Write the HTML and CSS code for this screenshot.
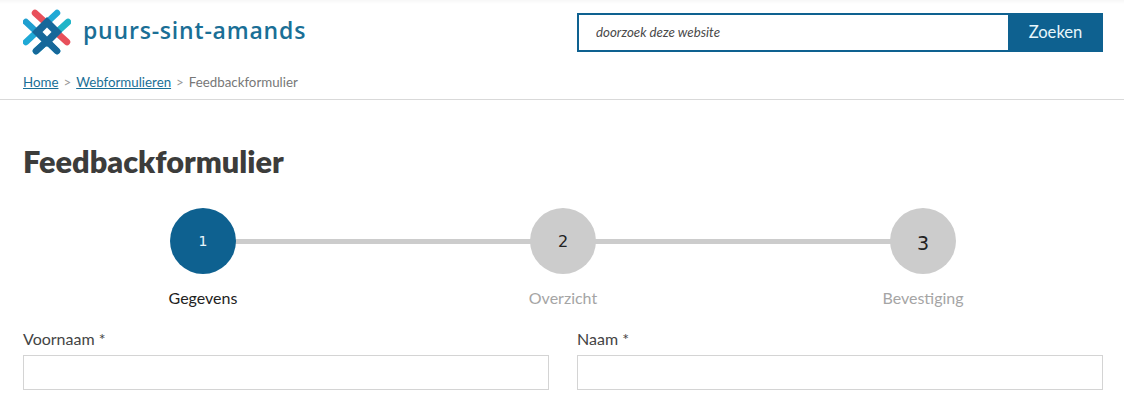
FILE: index.html
```html
<!DOCTYPE html>
<html lang="nl">
<head>
<meta charset="utf-8">
<title>Feedbackformulier</title>
<link rel="stylesheet" href="styles.css">
</head>
<body>
<header class="site-header">
  <div class="top-row">
    <a class="logo" href="#">
      <svg class="logo-mark" width="48" height="46" viewBox="0 0 48 46" aria-hidden="true">
        <g fill="none" stroke-width="6.5" stroke-linecap="round">
          <path d="M12 4 L44 33" stroke="#e8505b"/>
          <path d="M3 13 L34 42" stroke="#1f9fd0"/>
          <path d="M34 4 L3 33" stroke="#1fa9d6"/>
          <path d="M45 13 L13 42" stroke="#1fb5c8"/>
          <path d="M24 32 L13 42" stroke="#16689a"/>
          <path d="M24 32 L34 42" stroke="#16689a"/>
        </g>
        <path d="M24 8 L39 23 L24 38 L9 23 Z" fill="#16689a"/>
        <path d="M24 18.500 L28.500 23 L24 27.500 L19.500 23 Z" fill="#fff"/>
      </svg>
      <span class="logo-text">puurs-sint-amands</span>
    </a>
    <form class="search">
      <input class="search-input" type="text" placeholder="doorzoek deze website">
      <button class="search-button" type="button">Zoeken</button>
    </form>
  </div>
  <nav class="breadcrumb">
    <a href="#">Home</a><span class="sep">&gt;</span><a href="#">Webformulieren</a><span class="sep">&gt;</span><span class="current">Feedbackformulier</span>
  </nav>
</header>
<main class="content">
  <h1>Feedbackformulier</h1>
  <ol class="steps">
    <li class="step active"><span class="circle">1</span><span class="step-label">Gegevens</span></li>
    <li class="step"><span class="circle medium">2</span><span class="step-label">Overzicht</span></li>
    <li class="step"><span class="circle large">3</span><span class="step-label">Bevestiging</span></li>
  </ol>
  <form class="fields">
    <label class="field"><span class="field-label">Voornaam *</span><input type="text"></label>
    <label class="field"><span class="field-label">Naam *</span><input type="text"></label>
  </form>
</main>
</body>
</html>
```
FILE: styles.css
```css
* { box-sizing: border-box; }
html, body { height: 406px; overflow: hidden; }
body {
  margin: 0;
  background: #fff;
  color: #3c3c3b;
  font-family: "Lato", "Open Sans", sans-serif;
  font-size: 15px;
}
.site-header {
  height: 100px;
  padding: 0 21px 0 23px;
  border-bottom: 1px solid #d9d9d9;
  background: linear-gradient(#f7f7f7 0, #fff 4px);
}
.top-row {
  display: flex;
  justify-content: space-between;
  align-items: flex-start;
  height: 73px;
}
.logo {
  display: flex;
  align-items: center;
  gap: 12px;
  height: 46px;
  margin-top: 9px;
  text-decoration: none;
}
.logo-mark { flex: none; }
.logo-text {
  margin-bottom: 4px;
  font-family: "Open Sans", sans-serif;
  font-size: 23px;
  font-weight: 600;
  font-stretch: 90%;
  letter-spacing: 0.8px;
  color: #1a6f96;
}
.search {
  display: flex;
  width: 526px;
  height: 39px;
  margin-top: 13px;
}
.search-input {
  flex: 1;
  min-width: 0;
  padding: 0 17px 2px;
  border: 2px solid #0e6190;
  border-right: 0;
  background: #fff;
  font: italic 13.3px "Lato", sans-serif;
  outline: 0;
}
.search-input::placeholder { color: #4a4a4a; opacity: 1; }
.search-button {
  width: 95px;
  padding: 0 0 2px;
  border: 0;
  background: #0e6190;
  color: #e8f6fb;
  font: 16.6px "Lato", sans-serif;
}
.breadcrumb {
  display: flex;
  align-items: center;
  height: 18px;
  font-size: 13.3px;
  color: #7a7a7a;
}
.breadcrumb a { color: #1a6f96; }
.sep { margin: 0 5px; color: #999; }
.current { color: #777; }
.content { padding: 0 21px 0 23px; }
h1 {
  margin: 44px 0 0;
  font-size: 30.7px;
  line-height: 36px;
  font-weight: 800;
  color: #3c3c3b;
}
.steps {
  display: grid;
  grid-template-columns: repeat(3, 1fr);
  margin: 28px 0 0;
  padding: 0;
  list-style: none;
}
.step {
  position: relative;
  display: flex;
  flex-direction: column;
  align-items: center;
  gap: 14px;
}
.step:not(:last-child)::after {
  content: "";
  position: absolute;
  top: 31px;
  left: 50%;
  width: 100%;
  height: 5px;
  background: #ccc;
}
.circle {
  position: relative;
  z-index: 1;
  display: flex;
  align-items: center;
  justify-content: center;
  width: 66px;
  height: 66px;
  border-radius: 50%;
  background: #ccc;
  color: #222;
  font-family: "DejaVu Sans", sans-serif;
  font-size: 14px;
}
.circle.medium { font-size: 16px; }
.circle.large { font-size: 19px; padding-top: 4px; }
.active .circle { background: #0e6190; color: #e8f6fb; }
.step-label {
  font-size: 16px;
  line-height: 20px;
  color: #a5a5a5;
}
.active .step-label { color: #222; }
.fields {
  display: grid;
  grid-template-columns: 526px 526px;
  column-gap: 28px;
  margin-top: 21px;
}
.field { display: flex; flex-direction: column; gap: 6px; }
.field-label { font-size: 16px; line-height: 20px; color: #444; }
.field input {
  height: 35px;
  border: 1px solid #d4d4d4;
  background: #fff;
}
```
